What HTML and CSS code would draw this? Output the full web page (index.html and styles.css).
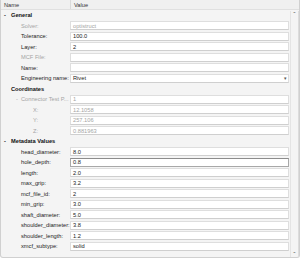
FILE: index.html
```html
<!DOCTYPE html>
<html lang="en">
<head>
    <meta charset="UTF-8">
    <title>Properties</title>
    <link rel="stylesheet" href="styles.css">
</head>
<body>
    <div class="panel">
        <div class="head">
            <div class="head-cell name-col">Name</div>
            <div class="head-cell">Value</div>
        </div>
        <div class="body">
            <div class="rows">
                <div class="row section"><span class="toggle">-</span>General</div>
                <div class="row"><span class="label off">Solver:</span><span class="field off">optistruct</span></div>
                <div class="row"><span class="label">Tolerance:</span><span class="field">100.0</span></div>
                <div class="row"><span class="label">Layer:</span><span class="field">2</span></div>
                <div class="row"><span class="label off">MCF File:</span><span class="field"></span></div>
                <div class="row"><span class="label">Name:</span><span class="field"></span></div>
                <div class="row"><span class="label">Engineering name:</span><span class="field combo">Rivet<span class="arrow">&#9662;</span></span></div>
                <div class="row section"><span class="toggle"></span>Coordinates</div>
                <div class="row"><span class="label off sub"><span class="bullet">-</span>Connector Test P...</span><span class="field off">1</span></div>
                <div class="row"><span class="label off deep">X:</span><span class="field off">12.1058</span></div>
                <div class="row"><span class="label off deep">Y:</span><span class="field off">257.106</span></div>
                <div class="row"><span class="label off deep">Z:</span><span class="field off">0.881963</span></div>
                <div class="row section"><span class="toggle">-</span>Metadata Values</div>
                <div class="row"><span class="label">head_diameter:</span><span class="field">8.0</span></div>
                <div class="row"><span class="label">hole_depth:</span><span class="field active">0.8</span></div>
                <div class="row"><span class="label">length:</span><span class="field">2.0</span></div>
                <div class="row"><span class="label">max_grip:</span><span class="field">3.2</span></div>
                <div class="row"><span class="label">mcf_file_id:</span><span class="field">2</span></div>
                <div class="row"><span class="label">min_grip:</span><span class="field">3.0</span></div>
                <div class="row"><span class="label">shaft_diameter:</span><span class="field">5.0</span></div>
                <div class="row"><span class="label">shoulder_diameter:</span><span class="field">3.8</span></div>
                <div class="row"><span class="label">shoulder_length:</span><span class="field">1.2</span></div>
                <div class="row"><span class="label">xmcf_subtype:</span><span class="field">solid</span></div>
            </div>
            <div class="scroll">
                <span class="btn">&#710;</span>
                <div class="track"></div>
                <span class="btn">&#711;</span>
            </div>
        </div>
    </div>
</body>
</html>
```

FILE: styles.css
```css
body {
    margin: 0;
    background-color: #fff;
    font-family: "Liberation Sans", Arial, sans-serif;
    font-size: 5.7px;
    color: #222;
}
.panel {
    width: 298px;
    height: 257px;
    border: 1px solid #d0d0d0;
    border-top: none;
    border-radius: 0 0 3px 3px;
    background-color: #f4f4f4;
    display: flex;
    flex-direction: column;
}
.head {
    display: flex;
    height: 10px;
    background-color: #f0f0f0;
    border-bottom: 1px solid #e0e0e0;
    box-sizing: border-box;
}
.head-cell {
    display: flex;
    align-items: center;
    padding-left: 3px;
    color: #333;
}
.name-col {
    width: 66px;
    border-right: 1px solid #dadada;
}
.body {
    display: flex;
    flex: 1;
}
.rows {
    flex: 1;
    display: flex;
    flex-direction: column;
}
.row {
    height: 10.5px;
    display: flex;
    align-items: center;
}
.section {
    font-weight: bold;
    color: #111;
}
.toggle {
    width: 10px;
    padding-left: 3px;
    box-sizing: border-box;
}
.label {
    width: 69px;
    padding-left: 20px;
    box-sizing: border-box;
    white-space: nowrap;
    overflow: hidden;
}
.label.deep {
    padding-left: 32px;
}
.bullet {
    display: inline-block;
    width: 5px;
    margin-left: -5px;
}
.off {
    color: #a4a4a4;
}
.field {
    flex: 1;
    height: 9px;
    margin-right: 1px;
    display: flex;
    align-items: center;
    padding-left: 2px;
    background-color: #fff;
    border: 1px solid #dedede;
    border-bottom-color: #cfcfcf;
    box-sizing: border-box;
}
.field.active {
    border-color: #a8a8a8;
    border-top-color: #8c8c8c;
}
.combo {
    justify-content: space-between;
}
.arrow {
    font-size: 5px;
    color: #555;
    padding-right: 1px;
}
.scroll {
    width: 9px;
    display: flex;
    flex-direction: column;
    align-items: center;
    margin-top: 1px;
    border-left: 1px solid #e4e4e4;
    border-right: 1px solid #dcdcdc;
    box-sizing: border-box;
}
.btn {
    height: 6px;
    font-size: 7px;
    line-height: 8px;
    color: #666;
}
.track {
    flex: 1;
    width: 100%;
}
```
